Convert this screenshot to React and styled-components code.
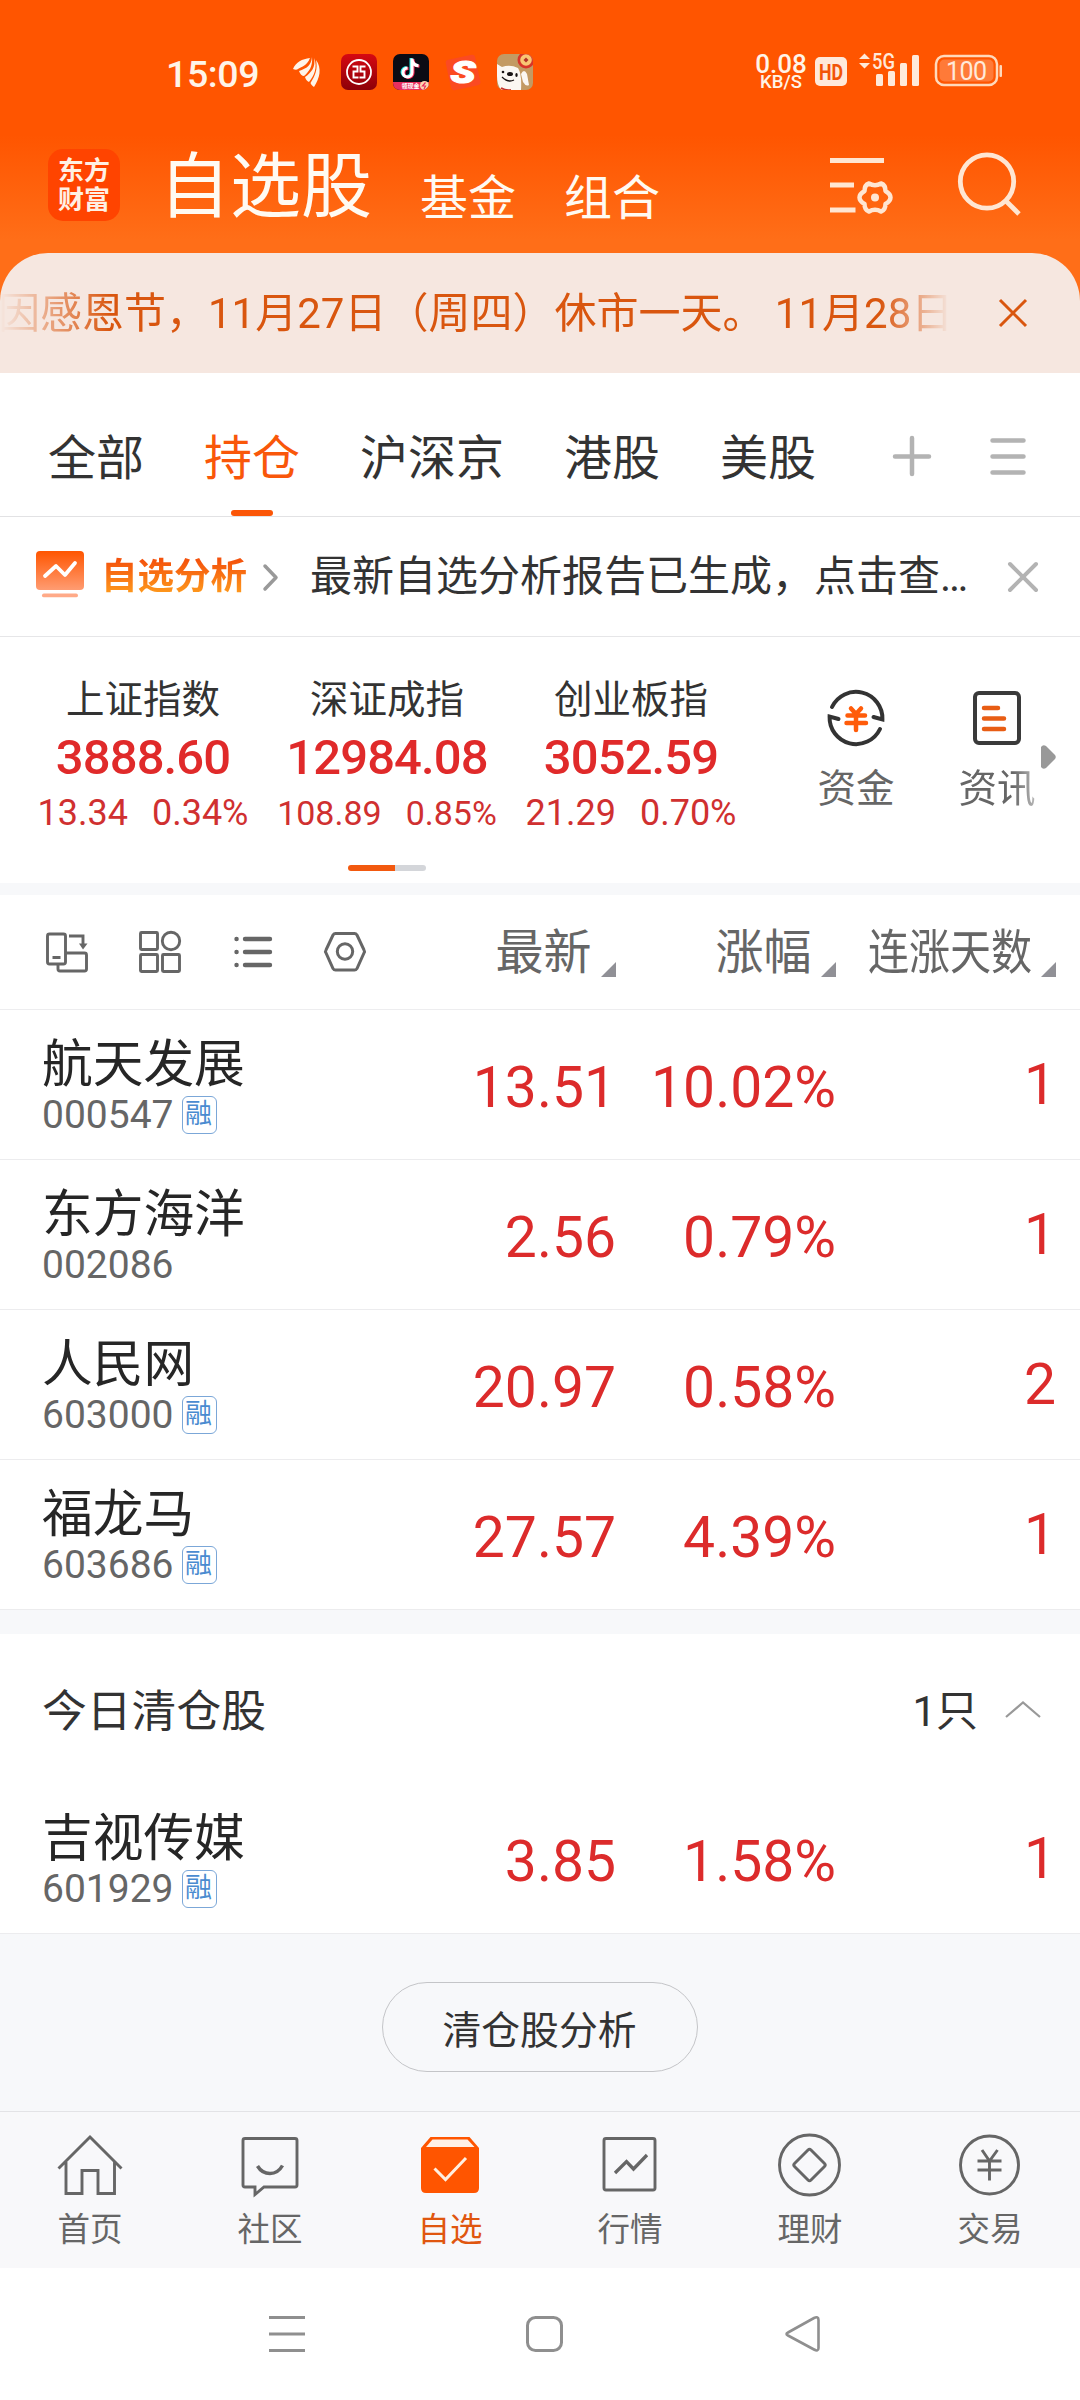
import React, { Component } from 'react'
import styled, { createGlobalStyle } from 'styled-components'

const GlobalStyle = createGlobalStyle`
  * { box-sizing: border-box; }
  body {
    margin: 0;
    background: #fff;
    font-family: Roboto, 'Noto Sans CJK SC', sans-serif;
    color: #333;
  }
  svg { display: block; flex: none; overflow: visible; }
`

const Page = styled.div`
  width: 1080px;
  height: 2400px;
  display: flex;
  flex-direction: column;
  overflow: hidden;
  background: #fff;
`

//orange top
const Top = styled.div`
  height: 373px;
  flex: none;
  display: flex;
  flex-direction: column;
  background: linear-gradient(#ff5500 0, #ff5500 135px, #ff6e18 240px, #ff6e18 100%);
`
const StatusBar = styled.div`
  height: 144px;
  padding: 0 78px 0 166px;
  display: flex;
  align-items: center;
  justify-content: space-between;
  color: #fff4e8;
`
const StatusGroup = styled.div`
  display: flex;
  align-items: center;
`
const Clock = styled.div`
  width: 127px;
  padding-top: 3px;
  font-size: 37.5px;
  line-height: 40px;
  letter-spacing: -0.4px;
  font-weight: 500;
`
const AppIcons = styled.div`
  display: flex;
  align-items: center;
  gap: 16px;
`
const Speed = styled.div`
  width: 54px;
  margin-right: 7px;
  padding-top: 3px;
  text-align: center;
  font-size: 26px;
  line-height: 18px;
  font-weight: 500;
  small {
    display: block;
    font-size: 18.5px;
    line-height: 19px;
  }
`
const TitleBar = styled.div`
  height: 109px;
  padding: 0 60px 0 48px;
  display: flex;
  align-items: flex-start;
`
const Logo = styled.div`
  width: 72px;
  height: 72px;
  margin-top: 5px;
  padding-top: 8px;
  border-radius: 15px;
  background: #ff4400;
  color: #fff0e4;
  text-align: center;
  font-size: 26px;
  font-weight: bold;
  line-height: 29px;
`
const TopTab = styled.div`
  margin-left: ${p => p.$gap}px;
  margin-top: ${p => (p.$big ? -5 : 20)}px;
  font-size: ${p => (p.$big ? 71 : 48)}px;
  line-height: ${p => (p.$big ? 96 : 70)}px;
  color: #fffaf2;
`
const TopIcons = styled.div`
  margin-left: auto;
  margin-top: 12px;
  display: flex;
  align-items: flex-start;
  gap: 65px;
  svg + svg { margin-top: -4px; }
`
const Notice = styled.div`
  height: 120px;
  display: flex;
  align-items: center;
  border-radius: 48px 48px 0 0;
  background: #f6e7e0;
  color: #d9560f;
`
const NoticeText = styled.div`
  width: 950px;
  margin-right: 48px;
  padding-top: 2px;
  overflow: hidden;
  white-space: pre;
  font-size: 42px;
  line-height: 60px;
  text-indent: -2px;
  mask-image: linear-gradient(90deg, transparent 0, #000 110px, #000 880px, transparent 100%);
`

//tabs under the notice
const Tabs = styled.div`
  height: 144px;
  flex: none;
  padding: 0 54px 0 48px;
  display: flex;
  align-items: stretch;
  gap: 60px;
  border-bottom: 1px solid #e2e2e4;
`
const Tab = styled.div`
  display: flex;
  flex-direction: column;
  align-items: center;
  justify-content: flex-end;
  font-size: 48px;
  line-height: 64px;
  color: ${p => (p.$on ? '#f9570a' : '#333')};
  &::after {
    content: '';
    width: 42px;
    height: 6px;
    margin-top: 19px;
    border-radius: 3px;
    background: ${p => (p.$on ? '#fb5607' : 'transparent')};
  }
`
const TabTools = styled.div`
  margin-left: auto;
  padding-top: 63px;
  display: flex;
  gap: 58px;
`

const Banner = styled.div`
  height: 120px;
  flex: none;
  padding: 1px 42px 0 36px;
  display: flex;
  align-items: center;
  border-bottom: 1px solid #e6e6e8;
`
const BannerName = styled.div`
  width: 162px;
  flex: none;
  padding-left: 17px;
  margin-right: 17px;
  white-space: nowrap;
  font-size: 36.5px;
  line-height: 50px;
  font-weight: bold;
  background: linear-gradient(#f4520c 15%, #ffa01e 90%);
  background-clip: text;
  color: transparent;
`
const BannerText = styled.div`
  flex: none;
  width: 660px;
  margin-left: 32px;
  margin-right: 38px;
  white-space: nowrap;
  font-size: 42px;
  line-height: 60px;
`

//index quotes
const Quotes = styled.div`
  height: 246px;
  flex: none;
  display: flex;
  padding-left: 21px;
`
const QuotePager = styled.div`
  width: 732px;
  flex: none;
  display: flex;
  flex-direction: column;
  align-items: center;
`
const QuoteList = styled.div`
  width: 100%;
  height: 228px;
  display: flex;
`
const Quote = styled.div`
  width: 244px;
  padding-top: 36px;
  text-align: center;
`
const QuoteName = styled.div`
  font-size: 38.5px;
  line-height: 54px;
`
const QuoteValue = styled.div`
  font-size: 49px;
  line-height: 62px;
  letter-spacing: -0.9px;
  font-weight: 500;
  color: #e02a2a;
`
const QuoteChange = styled.div`
  display: flex;
  justify-content: center;
  gap: 24px;
  font-size: ${p => (p.$small ? 34 : 36)}px;
  line-height: 48px;
  color: #d03030;
`
const PageDots = styled.div`
  width: 78px;
  height: 6px;
  border-radius: 3px;
  background: linear-gradient(90deg, #f2590f 47px, #d4d6da 47px);
`
const Shortcut = styled.div`
  width: ${p => p.$w}px;
  padding-top: 52px;
  display: flex;
  flex-direction: column;
  align-items: center;
  font-size: 38.5px;
  line-height: 54px;
  white-space: nowrap;
  color: #666;
  svg { margin-bottom: 15px; }
`
const Faded = styled.div`
  mask-image: linear-gradient(90deg, #000 70%, rgba(0, 0, 0, 0.45) 100%);
`
const More = styled.div`
  padding: 108px 0 0 6px;
`

const Strip = styled.div`
  height: ${p => p.$h}px;
  flex: none;
  background: #f7f8fa;
`

//list head
const ListHead = styled.div`
  height: 115px;
  flex: none;
  padding: 0 24px 0 43px;
  display: flex;
  align-items: center;
  border-bottom: 1px solid #ededef;
`
const ViewIcons = styled.div`
  width: 323px;
  display: flex;
  justify-content: space-between;
  align-items: center;
`
const Sort = styled.div`
  width: ${p => p.$w}px;
  padding-top: 2px;
  display: flex;
  align-items: center;
  justify-content: flex-end;
  font-size: 48px;
  line-height: 64px;
  color: #666;
  white-space: nowrap;
  svg { margin: 33px 0 0 9.5px; }
`
const Narrow = styled.span`
  width: 164px;
  span {
    display: inline-block;
    transform: scaleX(0.855);
    transform-origin: 0 50%;
  }
`

//stock rows
const Row = styled.div`
  height: 150px;
  flex: none;
  padding: 0 24px 0 42px;
  display: flex;
  border-bottom: 1px solid #ececee;
`
const Stock = styled.div`
  width: 354px;
  padding-top: 22px;
`
const StockName = styled.div`
  font-size: 50.7px;
  line-height: 65px;
  color: #262626;
`
const StockCode = styled.div`
  display: flex;
  align-items: center;
  height: 36px;
  gap: 8px;
  font-size: 39px;
  line-height: 36px;
  color: #666;
`
const Badge = styled.span`
  width: 35px;
  height: 38px;
  border: 1.5px solid #7ba7d8;
  border-radius: 6px;
  text-align: center;
  text-indent: -1px;
  font-size: 27px;
  line-height: 35px;
  color: #4a8bd0;
`
const Num = styled.div`
  width: ${p => p.$w}px;
  padding-top: ${p => (p.$up ? 39 : 42)}px;
  text-align: right;
  font-size: 57px;
  line-height: 72px;
  color: #dc2b2b;
`

const ClearedHead = styled.div`
  height: 150px;
  flex: none;
  padding: 5px 39px 0 42px;
  display: flex;
  align-items: center;
  justify-content: space-between;
  font-size: 44.8px;
  line-height: 60px;
`
const ClearedCount = styled.div`
  display: flex;
  align-items: center;
  gap: 27px;
  font-size: 42px;
  svg { margin-top: -5px; }
`
const ButtonArea = styled.div`
  height: 177px;
  flex: none;
  padding-top: 48px;
  display: flex;
  justify-content: center;
  align-items: flex-start;
  background: #f7f8fa;
`
const PillButton = styled.button`
  width: 316px;
  height: 90px;
  padding: 0 1px 1px 0;
  border: 1.5px solid #c4c5c8;
  border-radius: 45px;
  background: transparent;
  font: inherit;
  font-size: 38.8px;
  color: #333;
`

const TabBar = styled.div`
  height: 157px;
  flex: none;
  display: flex;
  border-top: 1px solid #e3e3e6;
  background: #f8f8fa;
`
const TabItem = styled.div`
  flex: 1;
  display: flex;
  flex-direction: column;
  align-items: center;
  padding-top: 17px;
  font-size: 32.5px;
  line-height: 44px;
  color: ${p => (p.$on ? '#e0560f' : '#666')};
  svg { margin-bottom: 13px; }
`
const SystemNav = styled.div`
  flex: 1;
  padding: 48px 0 0 269px;
  display: flex;
  align-items: flex-start;
  gap: 221px;
`

const stocks = [
  { name: '航天发展', code: '000547', margin: true, price: '13.51', change: '10.02%', days: 1 },
  { name: '东方海洋', code: '002086', margin: false, price: '2.56', change: '0.79%', days: 1 },
  { name: '人民网', code: '603000', margin: true, price: '20.97', change: '0.58%', days: 2 },
  { name: '福龙马', code: '603686', margin: true, price: '27.57', change: '4.39%', days: 1 },
]
const cleared = { name: '吉视传媒', code: '601929', margin: true, price: '3.85', change: '1.58%', days: 1 }

const indexes = [
  { name: '上证指数', value: '3888.60', diff: '13.34', pct: '0.34%' },
  { name: '深证成指', value: '12984.08', diff: '108.89', pct: '0.85%', small: true },
  { name: '创业板指', value: '3052.59', diff: '21.29', pct: '0.70%' },
]

//status bar app icons
const EagleIcon = () => (
  <svg width="32" height="36" viewBox="0 0 32 36" fill="#fff4e8">
    <path d="M17 4C9 5 3 8 0 15C2 16 4 16 5 15C8 13 14 12 17 4Z" />
    <path d="M19 3C18 12 14 14 6 17C7 20 9 22 11 22C16 18 20 12 19 3Z" />
    <path d="M21 4C23 13 18 19 12 23C13 26 14 27 16 28C21 22 25 13 21 4Z" />
    <path d="M23 6C29 14 27 24 21 33C19 32 18 30 17.500 29C22 22 25 15 23 6Z" />
  </svg>
)
const BankIcon = () => (
  <svg width="36" height="36" viewBox="0 0 36 36">
    <defs>
      <linearGradient id="bank" x2="0" y2="1">
        <stop stopColor="#d60912" />
        <stop offset="1" stopColor="#8c0008" />
      </linearGradient>
    </defs>
    <rect width="36" height="36" rx="7" fill="url(#bank)" />
    <circle cx="18" cy="18" r="12" fill="none" stroke="#fff" strokeWidth="1.800" />
    <path d="M11.500 12.500h5v5h-4v6h5M24.500 12.500h-5v5h4v6h-5" fill="none" stroke="#fff" strokeWidth="1.900" />
  </svg>
)
const MusicIcon = () => (
  <svg width="36" height="36" viewBox="0 0 36 36">
    <defs>
      <clipPath id="music"><rect width="36" height="36" rx="7" /></clipPath>
    </defs>
    <g clipPath="url(#music)">
      <rect width="36" height="36" fill="#0b0b14" />
      <g fill="none" strokeWidth="3">
        <path d="M18 4v14a4.500 4.500 0 1 1-4.500-4.500M18 5c.5 4 3 6 6.500 6.300" stroke="#27e8e4" />
        <path d="M20 5v14a4.500 4.500 0 1 1-4.500-4.500M20 6c.5 4 3 6 6.500 6.300" stroke="#fb2c5c" />
        <path d="M19 4.500v14a4.500 4.500 0 1 1-4.500-4.500M19 5.500c.5 4 3 6 6.500 6.300" stroke="#fff" />
      </g>
      <rect y="28" width="36" height="8" fill="#e92f5e" />
      <circle cx="31.500" cy="31.500" r="4.500" fill="#fbd7b0" />
      <path d="M32.500 28.500l-3 3.500h3l-1.500 3" fill="none" stroke="#e92f5e" strokeWidth="1.200" />
      <text x="8.500" y="34.300" fontSize="6" fontWeight="bold" fill="#fff">领现金</text>
    </g>
  </svg>
)
const SogouIcon = () => (
  <svg width="36" height="36" viewBox="0 0 36 36">
    <rect x="3" y="3" width="30" height="31" rx="3" fill="#fb4a22" transform="rotate(-12 18 18)" />
    <text x="5.500" y="29" fontSize="32" fontWeight="900" fontStyle="italic" fill="#fff" stroke="#fff" strokeWidth="1.200" textLength="25" lengthAdjust="spacingAndGlyphs">S</text>
  </svg>
)
const DogIcon = () => (
  <svg width="36" height="36" viewBox="0 0 36 36">
    <defs>
      <clipPath id="dog"><rect width="36" height="36" rx="7" /></clipPath>
    </defs>
    <g clipPath="url(#dog)">
      <rect width="36" height="36" fill="#c39a63" />
      <path d="M0 10L5 13Q13 10 21 14Q25 20 24 36H4Q0 30 0 22Z" fill="#fbf7f2" />
      <path d="M24 20Q27 14 30 20L32 31Q29 33 26 28Z" fill="#fbf7f2" />
      <circle cx="29" cy="6" r="8.500" fill="#d8342a" />
      <circle cx="29" cy="6" r="5.800" fill="#f9c674" />
      <path d="M29 3.500l2.500 2.500-2.500 2.500-2.500-2.500z" fill="#b5332a" />
      <ellipse cx="13" cy="20" rx="3" ry="2" fill="#191313" />
      <circle cx="6" cy="18" r="1.300" fill="#191313" />
      <ellipse cx="19.500" cy="21" rx="1.200" ry="2" fill="#191313" />
      <path d="M5 23q6 6 12 3" fill="none" stroke="#191313" strokeWidth="1.300" />
      <path d="M4 34q5 3 10 2" stroke="#c8342a" strokeWidth="2" fill="none" />
    </g>
  </svg>
)
const SignalIcons = () => (
  <svg width="187" height="34" viewBox="0 0 187 34" fill="#ffe9da">
    <rect x="0" y="2" width="32" height="29" rx="5" />
    <text x="4" y="25" fontSize="22.500" fontWeight="bold" fill="#f25406" textLength="24" lengthAdjust="spacingAndGlyphs">HD</text>
    <path d="M44 4l5.500-5.500L55 4zM44 8h11l-5.500 5.500z" />
    <text x="57" y="14" fontSize="21.500" fontWeight="500" textLength="23" lengthAdjust="spacingAndGlyphs">5G</text>
    <rect x="61" y="19" width="7" height="12" rx="1.500" />
    <rect x="73" y="16" width="7" height="15" rx="1.500" />
    <rect x="85" y="8" width="7" height="23" rx="1.500" />
    <rect x="97" y="0" width="7" height="31" rx="1.500" />
    <rect x="121" y="1" width="61" height="29" rx="8" fill="none" stroke="#ffd9bb" strokeWidth="2.500" />
    <rect x="124.500" y="4.500" width="54" height="22" rx="5" fill="#ff7a38" />
    <rect x="184.500" y="10" width="2.500" height="12" rx="1" fill="#ffd9bb" />
    <text x="131" y="24.500" fontSize="25" textLength="41">100</text>
  </svg>
)

//title bar icons
const FilterIcon = () => (
  <svg width="63" height="60" viewBox="0 0 63 60" fill="none" stroke="#ffe6d2" strokeWidth="5">
    <path d="M0 4.500H54M0 29H24M0 54H25.500" />
    <path d="M39 27.500Q45 31 51 27.500Q55.500 29 55.500 35Q60.500 38 60.500 41.500Q60.500 45 55.500 48Q55.500 54 51 55.500Q45 52 39 55.500Q34.500 54 34.500 48Q29.500 45 29.500 41.500Q29.500 38 34.500 35Q34.500 29 39 27.500Z" strokeWidth="4.500" strokeLinejoin="round" />
    <circle cx="45" cy="41.500" r="4" fill="#ffe6d2" stroke="none" />
  </svg>
)
const SearchIcon = () => (
  <svg width="62" height="64" viewBox="0 0 62 64" fill="none" stroke="#ffe6d2" strokeWidth="4.800">
    <circle cx="29" cy="29.500" r="26.700" />
    <path d="M47.500 48.500L61 62" />
  </svg>
)
const CloseIcon = ({ color, width, round }) => (
  <svg width="30" height="30" viewBox="0 0 30 30" fill="none" stroke={color} strokeWidth={width} strokeLinecap={round ? 'round' : 'butt'}>
    <path d="M2 2L28 28M28 2L2 28" />
  </svg>
)
const PlusIcon = () => (
  <svg width="40" height="40" viewBox="0 0 40 40" stroke="#b3b3b3" strokeWidth="4.500" strokeLinecap="round">
    <path d="M20 2V38M3 20.500H37" />
  </svg>
)
const MenuIcon = () => (
  <svg width="36" height="40" viewBox="0 0 36 40" stroke="#b3b3b3" strokeWidth="4.500" strokeLinecap="round">
    <path d="M2.500 4.500H33.500M2.500 20.500H33.500M2.500 36.500H33.500" />
  </svg>
)
const ReportIcon = () => (
  <svg width="48" height="48" viewBox="0 0 48 48">
    <defs>
      <linearGradient id="report" x2="0" y2="1">
        <stop stopColor="#ff5500" />
        <stop offset="1" stopColor="#ff9c72" />
      </linearGradient>
    </defs>
    <rect y="-2" width="48" height="39" rx="4" fill="url(#report)" />
    <path d="M9 23L20 13L29 22L39 10" fill="none" stroke="#fff" strokeWidth="3.800" strokeLinecap="round" strokeLinejoin="round" />
    <rect x="6" y="40.500" width="36" height="3.800" rx="1.900" fill="#ffaa88" />
  </svg>
)
const ChevronIcon = () => (
  <svg width="15" height="27" viewBox="0 0 15 27" fill="none" stroke="#999" strokeWidth="3.500" strokeLinecap="round" strokeLinejoin="round">
    <path d="M2 2L13 13.500L2 25" />
  </svg>
)
const MoneyIcon = () => (
  <svg width="58" height="58" viewBox="0 0 58 58" fill="none" stroke="#333" strokeWidth="4">
    <path d="M5 18A26.500 26.500 0 0 1 55.400 30.500L46.500 28" strokeLinecap="round" />
    <path d="M53 40A26.500 26.500 0 0 1 2.600 27.500L11.500 30" strokeLinecap="round" />
    <path d="M24 19.500L29 25L34 19.500M29 25V41M20.500 26.500H38M19.500 34H39" stroke="#ff5c0a" strokeWidth="4.500" strokeLinecap="round" />
  </svg>
)
const NewsIcon = () => (
  <svg width="48" height="58" viewBox="0 0 48 58" fill="none">
    <rect x="2" y="4" width="44" height="50" rx="4" stroke="#3a3a3a" strokeWidth="4" />
    <path d="M11 19H25M11 29.500H31M11 40H31" stroke="#e85d14" strokeWidth="4.500" strokeLinecap="round" />
  </svg>
)
const ArrowIcon = () => (
  <svg width="15" height="24" viewBox="0 0 15 24" fill="#999">
    <path d="M0 2Q2 -1 5 1L14 10Q15.500 12 14 14L5 23Q2 25 0 22Z" />
  </svg>
)

const RotateIcon = () => (
  <svg width="44" height="42" viewBox="0 0 44 42" fill="none" stroke="#666" strokeWidth="2.900">
    <rect x="4.500" y="3" width="18" height="30" rx="2" />
    <path d="M9.500 26.500H17.500M26 5H40V13M15 33V38Q15 40 17 40H41.500Q43.500 40 43.500 38V24Q43.500 22 41.500 22H22.500" />
    <path d="M36 12.500H44.500L40 18.500Z" fill="#666" stroke="none" />
  </svg>
)
const GridIcon = () => (
  <svg width="42" height="42" viewBox="0 0 42 42" fill="none" stroke="#666" strokeWidth="2.900">
    <rect x="1.500" y="1.500" width="17" height="17" rx="1" />
    <circle cx="32" cy="10" r="8.700" />
    <rect x="1.500" y="23.500" width="17" height="17" rx="1" />
    <rect x="23.500" y="23.500" width="17" height="17" rx="1" />
  </svg>
)
const ListIcon = () => (
  <svg width="38" height="42" viewBox="0 0 38 42" stroke="#666" strokeWidth="4.400" strokeLinecap="round">
    <path d="M2.500 8h.1M2.500 21h.1M2.500 34h.1M11 8H36M11 21H36M11 34H36" />
  </svg>
)
const HexIcon = () => (
  <svg width="42" height="42" viewBox="0 0 42 42" fill="none" stroke="#666" strokeWidth="3">
    <path d="M11.500 2.500H30.500Q32 2.500 33 4L40 19Q41 20.500 40 22L33 37.500Q32 39 30.500 39H11.500Q10 39 9 37.500L2 22Q1 20.500 2 19L9 4Q10 2.500 11.500 2.500Z" />
    <circle cx="21" cy="20.500" r="7.700" />
  </svg>
)
const SortMark = () => (
  <svg width="15" height="15" viewBox="0 0 15 15" fill="#909096">
    <path d="M15 0V15H0Z" />
  </svg>
)
const FoldIcon = () => (
  <svg width="36" height="17" viewBox="0 0 36 17" fill="none" stroke="#999" strokeWidth="2.200">
    <path d="M1 16L18 1.500L35 16" />
  </svg>
)

//bottom tab icons, all on a 66x66 box
const tabIcons = {
  home: (
    <path d="M1.500 39.500L33 8L64.500 39.500M9 33V64.500H25V41.500H41V64.500H57.500V33" />
  ),
  chat: (
    <>
      <path d="M8 9.500H58Q60 9.500 60 11.500V56Q60 58 58 58H27L18 65.500V58H8Q6 58 6 56V11.500Q6 9.500 8 9.500Z" />
      <path d="M20.500 37Q25 44.500 33 44.500Q41 44.500 45.500 36.500" strokeWidth="3.500" />
    </>
  ),
  pick: (
    <>
      <path d="M13.500 8H52.500L62 19V59Q62 64 57 64H9Q4 64 4 59V19Z" fill="#ff5500" stroke="none" />
      <path d="M15.500 10.500H50.500L57.500 18H9Z" fill="#fff0e6" stroke="none" />
      <path d="M17.500 39.500L28.500 50.500L49 29" stroke="#ffefe0" strokeWidth="3" />
    </>
  ),
  market: (
    <>
      <rect x="7" y="9.500" width="51" height="51.500" rx="2" />
      <path d="M18 44L29.500 32.500L36.500 40L50 26" strokeWidth="3.300" />
    </>
  ),
  wealth: (
    <>
      <circle cx="32.500" cy="36" r="30" />
      <path d="M31 21Q32.500 19.500 34 21L47.500 34.500Q49 36 47.500 37.500L34 51Q32.500 52.500 31 51L17.500 37.500Q16 36 17.500 34.500Z" />
    </>
  ),
  trade: (
    <>
      <circle cx="32.500" cy="36" r="29" />
      <path d="M25 21L32.500 32L40.500 21M32.500 31V51.500M20.500 32H44.500M20.500 41H44.500" />
    </>
  ),
}
const TabIcon = ({ name }) => (
  <svg width="66" height="66" viewBox="0 0 66 66" fill="none" stroke="#666" strokeWidth="2.900">
    {tabIcons[name]}
  </svg>
)

const tabs = [
  { icon: 'home', label: '首页' },
  { icon: 'chat', label: '社区' },
  { icon: 'pick', label: '自选' },
  { icon: 'market', label: '行情' },
  { icon: 'wealth', label: '理财' },
  { icon: 'trade', label: '交易' },
]

const StockRow = ({ stock }) => (
  <Row>
    <Stock>
      <StockName>{stock.name}</StockName>
      <StockCode>
        {stock.code}
        {stock.margin && <Badge>融</Badge>}
      </StockCode>
    </Stock>
    <Num $w={220}>{stock.price}</Num>
    <Num $w={220}>{stock.change}</Num>
    <Num $w={220} $up>{stock.days}</Num>
  </Row>
)

export default class App extends Component {
  state = {
    group: '持仓',
    page: '自选',
  }

  render() {
    const { group, page } = this.state
    return (
      <Page>
        <GlobalStyle />
        <Top>
          <StatusBar>
            <StatusGroup>
              <Clock>15:09</Clock>
              <AppIcons>
                <EagleIcon />
                <BankIcon />
                <MusicIcon />
                <SogouIcon />
                <DogIcon />
              </AppIcons>
            </StatusGroup>
            <StatusGroup>
              <Speed>0.08<small>KB/S</small></Speed>
              <SignalIcons />
            </StatusGroup>
          </StatusBar>
          <TitleBar>
            <Logo>东方<br />财富</Logo>
            <TopTab $big $gap={39}>自选股</TopTab>
            <TopTab $gap={48}>基金</TopTab>
            <TopTab $gap={48}>组合</TopTab>
            <TopIcons>
              <FilterIcon />
              <SearchIcon />
            </TopIcons>
          </TitleBar>
          <Notice>
            <NoticeText>因感恩节，11月27日（周四）休市一天。 11月28日</NoticeText>
            <CloseIcon color="#d9560f" width={3} />
          </Notice>
        </Top>

        <Tabs>
          {['全部', '持仓', '沪深京', '港股', '美股'].map(name => (
            <Tab key={name} $on={name === group} onClick={() => this.setState({ group: name })}>{name}</Tab>
          ))}
          <TabTools>
            <PlusIcon />
            <MenuIcon />
          </TabTools>
        </Tabs>

        <Banner>
          <ReportIcon />
          <BannerName>自选分析</BannerName>
          <ChevronIcon />
          <BannerText>最新自选分析报告已生成，点击查…</BannerText>
          <CloseIcon color="#b3b3b3" width={4} round />
        </Banner>

        <Quotes>
          <QuotePager>
            <QuoteList>
              {indexes.map(item => (
                <Quote key={item.name}>
                  <QuoteName>{item.name}</QuoteName>
                  <QuoteValue>{item.value}</QuoteValue>
                  <QuoteChange $small={item.small}>
                    <span>{item.diff}</span>
                    <span>{item.pct}</span>
                  </QuoteChange>
                </Quote>
              ))}
            </QuoteList>
            <PageDots />
          </QuotePager>
          <Shortcut $w={206}>
            <MoneyIcon />
            资金
          </Shortcut>
          <Shortcut $w={76}>
            <NewsIcon />
            <Faded>资讯</Faded>
          </Shortcut>
          <More><ArrowIcon /></More>
        </Quotes>
        <Strip $h={12} />

        <ListHead>
          <ViewIcons>
            <RotateIcon />
            <GridIcon />
            <ListIcon />
            <HexIcon />
          </ViewIcons>
          <Sort $w={250}>最新<SortMark /></Sort>
          <Sort $w={220}>涨幅<SortMark /></Sort>
          <Sort $w={220}><Narrow><span>连涨天数</span></Narrow><SortMark /></Sort>
        </ListHead>
        {stocks.map(stock => <StockRow key={stock.code} stock={stock} />)}
        <Strip $h={24} />

        <ClearedHead>
          今日清仓股
          <ClearedCount>1只<FoldIcon /></ClearedCount>
        </ClearedHead>
        <StockRow stock={cleared} />
        <ButtonArea>
          <PillButton>清仓股分析</PillButton>
        </ButtonArea>

        <TabBar>
          {tabs.map(tab => (
            <TabItem key={tab.label} $on={tab.label === page} onClick={() => this.setState({ page: tab.label })}>
              <TabIcon name={tab.icon} />
              {tab.label}
            </TabItem>
          ))}
        </TabBar>
        <SystemNav>
          <svg width="36" height="36" viewBox="0 0 36 36" stroke="#8f8f8f" strokeWidth="3">
            <path d="M0 1.500H36M0 18H36M0 34.500H36" />
          </svg>
          <svg width="37" height="36" viewBox="0 0 37 36" fill="none" stroke="#8f8f8f" strokeWidth="3">
            <rect x="1.500" y="1.500" width="34" height="33" rx="8" />
          </svg>
          <svg width="36" height="36" viewBox="0 0 36 36" fill="none" stroke="#8f8f8f" strokeWidth="2.600">
            <path d="M4 16.500L30 2Q34.500 0 34.500 4V32Q34.500 36 30 33.500L4 19.500Q1 18 4 16.500Z" />
          </svg>
        </SystemNav>
      </Page>
    )
  }
}
